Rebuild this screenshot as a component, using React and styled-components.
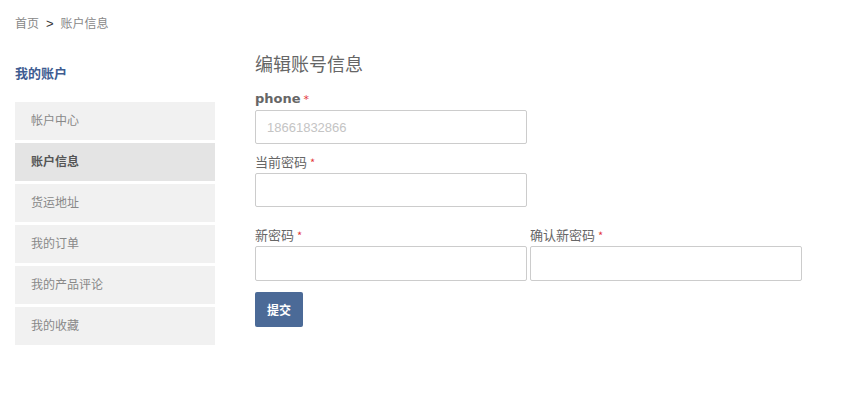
import React from 'react'
import styled, { createGlobalStyle } from 'styled-components'

const GlobalStyle = createGlobalStyle`
  body {
    margin: 0;
    background: #fff;
    font-family: "Liberation Sans", "Noto Sans CJK SC", sans-serif;
    color: #666;
  }
`

const menu = ['帐户中心', '账户信息', '货运地址', '我的订单', '我的产品评论', '我的收藏']

export default function App() {
  return (
    <Page>
      <GlobalStyle />
      <Breadcrumb>
        <Crumb>首页</Crumb>
        <Sep>&gt;</Sep>
        <Crumb>账户信息</Crumb>
      </Breadcrumb>

      <Columns>
        <Sidebar>
          <SideTitle>我的账户</SideTitle>
          {menu.map((item, i) => (
            <MenuItem key={item} active={i === 1}>{item}</MenuItem>
          ))}
        </Sidebar>

        <Main>
          <Title>编辑账号信息</Title>
          <Field>
            <Label latin>phone<Star>*</Star></Label>
            <Input placeholder="18661832866" />
          </Field>
          <Field gap={9}>
            <Label>当前密码<Star>*</Star></Label>
            <Input type="password" />
          </Field>
          <Row>
            <Field>
              <Label>新密码<Star>*</Star></Label>
              <Input type="password" tall />
            </Field>
            <Field>
              <Label>确认新密码<Star>*</Star></Label>
              <Input type="password" tall />
            </Field>
          </Row>
          <Submit>提交</Submit>
        </Main>
      </Columns>
    </Page>
  )
}

const Page = styled.div`
  padding: 16px 15px 0;
`
const Breadcrumb = styled.div`
  display: flex;
  align-items: center;
  gap: 7px;
  height: 16px;
  font-size: 12px;
  line-height: 16px;
`
const Crumb = styled.span`
  color: #888;
`
const Sep = styled.span`
  color: #333;
  font-size: 13px;
`
const Columns = styled.div`
  display: flex;
  margin-top: 20px;
  gap: 40px;
`
const Sidebar = styled.div`
  width: 200px;
  flex-shrink: 0;
`
const SideTitle = styled.div`
  margin: 12px 0 18px;
  height: 20px;
  line-height: 20px;
  font-size: 13px;
  font-weight: bold;
  color: #3e5c91;
`
const MenuItem = styled.div`
  height: 38px;
  line-height: 38px;
  margin-bottom: 3px;
  padding-left: 16px;
  font-size: 12px;
  background: ${p => (p.active ? '#e4e4e4' : '#f1f1f1')};
  color: ${p => (p.active ? '#555' : '#888')};
  font-weight: ${p => (p.active ? 'bold' : 'normal')};
`
const Main = styled.div`
  width: 547px;
`
const Title = styled.h2`
  margin: 1px 0 13px;
  font-size: 18px;
  line-height: 24px;
  font-weight: normal;
  color: #666;
`
const Field = styled.div`
  display: flex;
  flex-direction: column;
  gap: 2px;
  margin-top: ${p => (p.gap || 0)}px;
  flex: 1;
`
const Label = styled.label`
  display: block;
  height: 18px;
  overflow: hidden;
  font-size: 13px;
  line-height: 18px;
  color: #666;
  font-family: ${p => (p.latin ? '"DejaVu Sans", "Noto Sans CJK SC", sans-serif' : '"Noto Sans CJK SC", sans-serif')};
  font-weight: ${p => (p.latin ? 'bold' : 'normal')};
`
const Star = styled.span`
  color: #e4393c;
  font-weight: normal;
  font-size: 11px;
  line-height: 1;
  margin-left: 3px;
`
const Input = styled.input`
  box-sizing: border-box;
  width: 272px;
  height: ${p => (p.tall ? 35 : 34)}px;
  border: 1px solid #ccc;
  border-radius: 2px;
  padding: 0 11px;
  font-size: 13px;
  font-family: "Liberation Sans", sans-serif;
  color: #555;
  outline: none;
  &::placeholder {
    color: #c4c4c4;
  }
`
const Row = styled.div`
  display: flex;
  gap: 3px;
  margin-top: 19px;
`
const Submit = styled.button`
  display: block;
  margin-top: 11px;
  width: 48px;
  height: 35px;
  border: none;
  border-radius: 2px;
  background: #4b6a97;
  color: #fff;
  font-size: 12px;
  font-weight: bold;
  font-family: "Noto Sans CJK SC", sans-serif;
  padding: 0;
  cursor: pointer;
`
